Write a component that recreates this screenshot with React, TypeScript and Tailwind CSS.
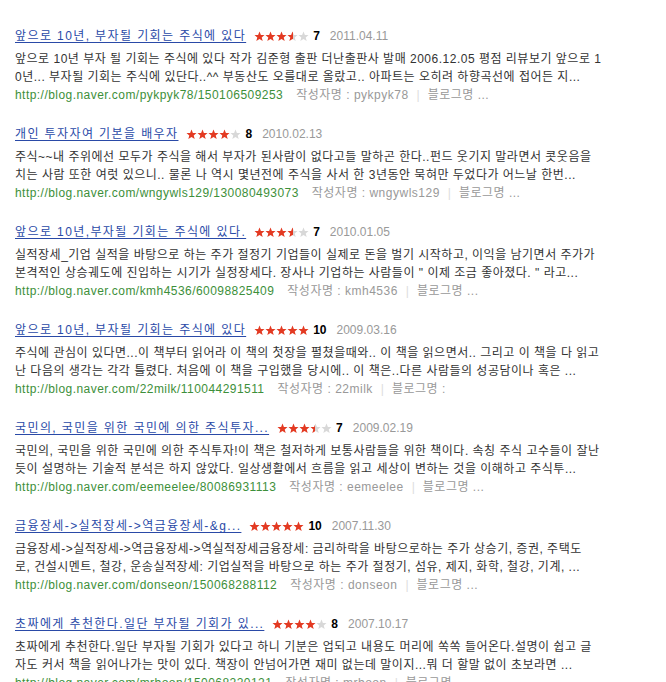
import React from "react";

type Review = {
  title: string;
  rating: number;
  date: string;
  lines: [string, string];
  url: string;
  author: string;
  blog: string;
};

const reviews: Review[] = [
  {
    title: "앞으로 10년, 부자될 기회는 주식에 있다",
    rating: 7,
    date: "2011.04.11",
    lines: [
      "앞으로 10년 부자 될 기회는 주식에 있다 작가 김준형 출판 더난출판사 발매 2006.12.05 평점 리뷰보기 앞으로 1",
      "0년... 부자될 기회는 주식에 있단다..^^ 부동산도 오를대로 올랐고.. 아파트는 오히려 하향곡선에 접어든 지...",
    ],
    url: "http://blog.naver.com/pykpyk78/150106509253",
    author: "pykpyk78",
    blog: "블로그명 ...",
  },
  {
    title: "개인 투자자여 기본을 배우자",
    rating: 8,
    date: "2010.02.13",
    lines: [
      "주식~~내 주위에선 모두가 주식을 해서 부자가 된사람이 없다고들 말하곤 한다..펀드 웃기지 말라면서 콧웃음을",
      "치는 사람 또한 여럿 있으니.. 물론 나 역시 몇년전에 주식을 사서 한 3년동안 묵혀만 두었다가 어느날 한번...",
    ],
    url: "http://blog.naver.com/wngywls129/130080493073",
    author: "wngywls129",
    blog: "블로그명 ...",
  },
  {
    title: "앞으로 10년,부자될 기회는 주식에 있다.",
    rating: 7,
    date: "2010.01.05",
    lines: [
      "실적장세_기업 실적을 바탕으로 하는 주가 절정기 기업들이 실제로 돈을 벌기 시작하고, 이익을 남기면서 주가가",
      "본격적인 상승궤도에 진입하는 시기가 실정장세다. 장사나 기업하는 사람들이 \" 이제 조금 좋아졌다. \" 라고...",
    ],
    url: "http://blog.naver.com/kmh4536/60098825409",
    author: "kmh4536",
    blog: "블로그명 ...",
  },
  {
    title: "앞으로 10년, 부자될 기회는 주식에 있다",
    rating: 10,
    date: "2009.03.16",
    lines: [
      "주식에 관심이 있다면...이 책부터 읽어라 이 책의 첫장을 펼쳤을때와.. 이 책을 읽으면서.. 그리고 이 책을 다 읽고",
      "난 다음의 생각는 각각 틀렸다. 처음에 이 책을 구입했을 당시에.. 이 책은..다른 사람들의 성공담이나 혹은 ...",
    ],
    url: "http://blog.naver.com/22milk/110044291511",
    author: "22milk",
    blog: "블로그명 :",
  },
  {
    title: "국민의, 국민을 위한 국민에 의한 주식투자...",
    rating: 7,
    date: "2009.02.19",
    lines: [
      "국민의, 국민을 위한 국민에 의한 주식투자!이 책은 철저하게 보통사람들을 위한 책이다. 속칭 주식 고수들이 잘난",
      "듯이 설명하는 기술적 분석은 하지 않았다. 일상생활에서 흐름을 읽고 세상이 변하는 것을 이해하고 주식투...",
    ],
    url: "http://blog.naver.com/eemeelee/80086931113",
    author: "eemeelee",
    blog: "블로그명 ...",
  },
  {
    title: "금융장세->실적장세->역금융장세-&g...",
    rating: 10,
    date: "2007.11.30",
    lines: [
      "금융장세->실적장세->역금융장세->역실적장세금융장세: 금리하락을 바탕으로하는 주가 상승기, 증권, 주택도",
      "로, 건설시멘트, 철강, 운송실적장세: 기업실적을 바탕으로 하는 주가 절정기, 섬유, 제지, 화학, 철강, 기계, ...",
    ],
    url: "http://blog.naver.com/donseon/150068288112",
    author: "donseon",
    blog: "블로그명 ...",
  },
  {
    title: "초짜에게 추천한다.일단 부자될 기회가 있...",
    rating: 8,
    date: "2007.10.17",
    lines: [
      "초짜에게 추천한다.일단 부자될 기회가 있다고 하니 기분은 업되고 내용도 머리에 쏙쏙 들어온다.설명이 쉽고 글",
      "자도 커서 책을 읽어나가는 맛이 있다. 책장이 안넘어가면 재미 없는데 말이지...뭐 더 할말 없이 초보라면 ...",
    ],
    url: "http://blog.naver.com/mrboon/150068220121",
    author: "mrboon",
    blog: "블로그명 ...",
  },
];

const STAR = "M5.5 0.6 L6.9 4 L10.5 4.1 L7.7 6.4 L8.7 10 L5.5 7.9 L2.3 10 L3.3 6.4 L0.5 4.1 L4.1 4 Z";

function Stars({ rating, id }: { rating: number; id: number }) {
  // rating is out of 10, each star = 2 points
  return (
    <svg width="55" height="11" viewBox="0 0 55 11" className="shrink-0">
      <defs>
        <linearGradient id={`half-${id}`} x1="0" x2="1" y1="0" y2="0">
          <stop offset="50%" stopColor="#e33a22" />
          <stop offset="50%" stopColor="#d8d8d8" />
        </linearGradient>
      </defs>
      {[0, 1, 2, 3, 4].map((i) => {
        const v = rating - i * 2;
        const fill = v >= 2 ? "#e33a22" : v === 1 ? `url(#half-${id})` : "#d8d8d8";
        return <path key={i} d={STAR} transform={`translate(${i * 11} 0)`} fill={fill} />;
      })}
    </svg>
  );
}

export default function App() {
  return (
    <div
      className="w-[666px] h-[682px] overflow-hidden bg-white pl-[15px] pt-[26px]"
      style={{ fontFamily: '"Liberation Sans", "Noto Sans CJK KR", sans-serif' }}
    >
      {reviews.map((r, idx) => (
        <div key={idx} className="mb-[21px]">
          <div className="flex items-center h-[20px]">
            <a className="text-[12px] tracking-[1.4px] text-[#2a4aa7] underline underline-offset-[2px] whitespace-nowrap">
              {r.title}
            </a>
            <div className="flex items-center gap-[4px] ml-[8px]">
              <Stars rating={r.rating} id={idx} />
              <span className="text-[12px] font-bold text-black">{r.rating}</span>
            </div>
            <span className="text-[12px] text-[#999] ml-[10px]">{r.date}</span>
          </div>
          <div className="mt-[4px] text-[12px] leading-[18px] tracking-[0.5px] text-[#333] whitespace-nowrap">
            <div>{r.lines[0]}</div>
            <div>{r.lines[1]}</div>
          </div>
          <div className="flex items-center h-[17px] text-[12px] whitespace-nowrap">
            <span className="text-[#3d8f3a] tracking-[0.45px]">{r.url}</span>
            <span className="text-[#999] ml-[13px] tracking-[0.5px]">작성자명 : {r.author}</span>
            <span className="text-[#ddd] mx-[8px]">|</span>
            <span className="text-[#999] tracking-[0.5px]">{r.blog}</span>
          </div>
        </div>
      ))}
    </div>
  );
}
